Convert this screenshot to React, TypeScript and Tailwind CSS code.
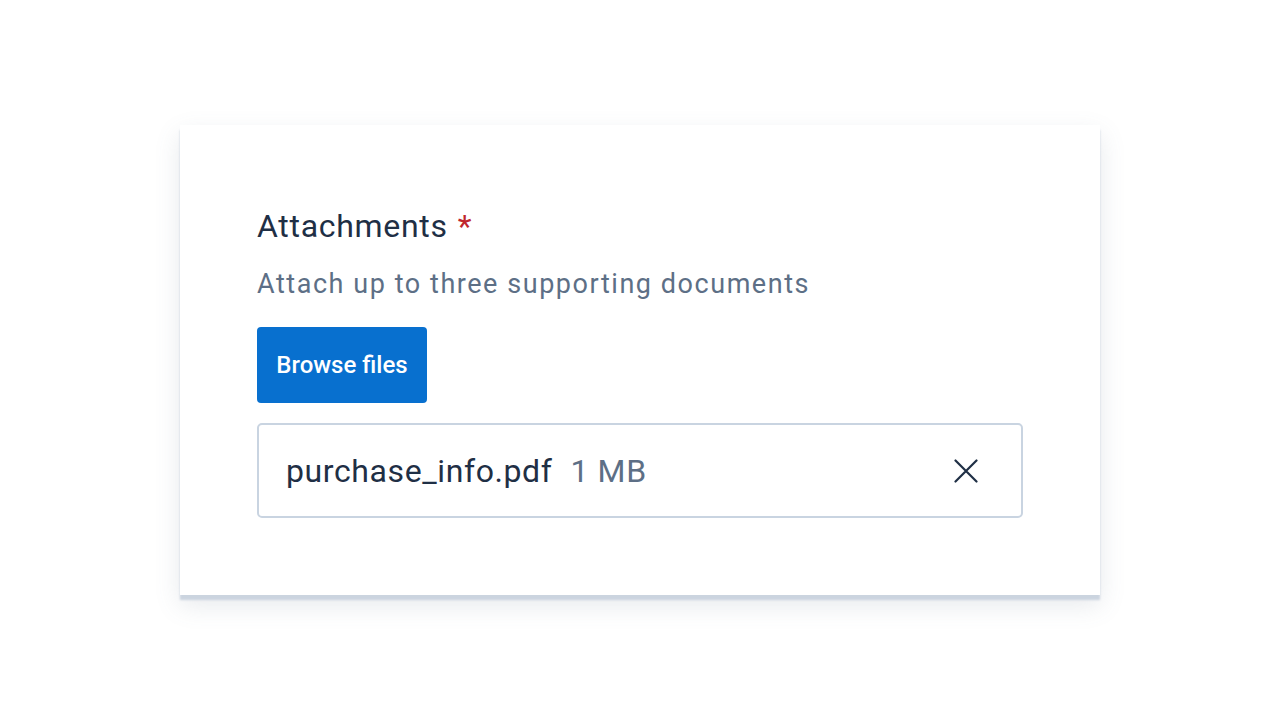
import React from 'react';

export default function App() {
  return (
    <div
      className="w-[1280px] h-[720px] bg-white flex justify-center pt-[125px]"
      style={{ fontFamily: 'Roboto, "Liberation Sans", sans-serif' }}
    >
      <div className="w-[920px] h-[470px] bg-white px-[77px] pt-[81px] shadow-[0_5px_2px_#cbd4df,0_10px_24px_rgba(100,116,139,0.16)]">
        {/* Label */}
        <div className="flex items-baseline text-[32px] leading-[40px] tracking-[0.7px] text-[#1f2f45]">
          <span>Attachments</span>
          <span className="ml-[10px] text-[#c0262d]">*</span>
        </div>
        <p className="mt-[21px] text-[27px] leading-[34px] tracking-[1.55px] text-[#5d6f86]">
          Attach up to three supporting documents
        </p>

        <button className="mt-[26px] h-[76px] w-[170px] rounded-[4px] bg-[#0870cf] text-white text-[24px] font-medium">
          Browse files
        </button>

        {/* File row */}
        <div className="mt-[20px] h-[95px] flex items-center justify-between rounded-[5px] border-2 border-[#c9d4e1] pl-[27px] pr-[43px]">
          <div className="flex items-baseline text-[32px] tracking-[0.6px]">
            <span className="text-[#1f2f45]">purchase_info.pdf</span>
            <span className="ml-[18px] text-[#5d6f86]">1 MB</span>
          </div>
          <svg width="24" height="24" viewBox="0 0 24 24" fill="none" stroke="#1f2f45" strokeWidth="2.2" strokeLinecap="round">
            <path d="M1.5 1.5L22.5 22.5M22.5 1.5L1.5 22.5" />
          </svg>
        </div>
      </div>
    </div>
  );
}
